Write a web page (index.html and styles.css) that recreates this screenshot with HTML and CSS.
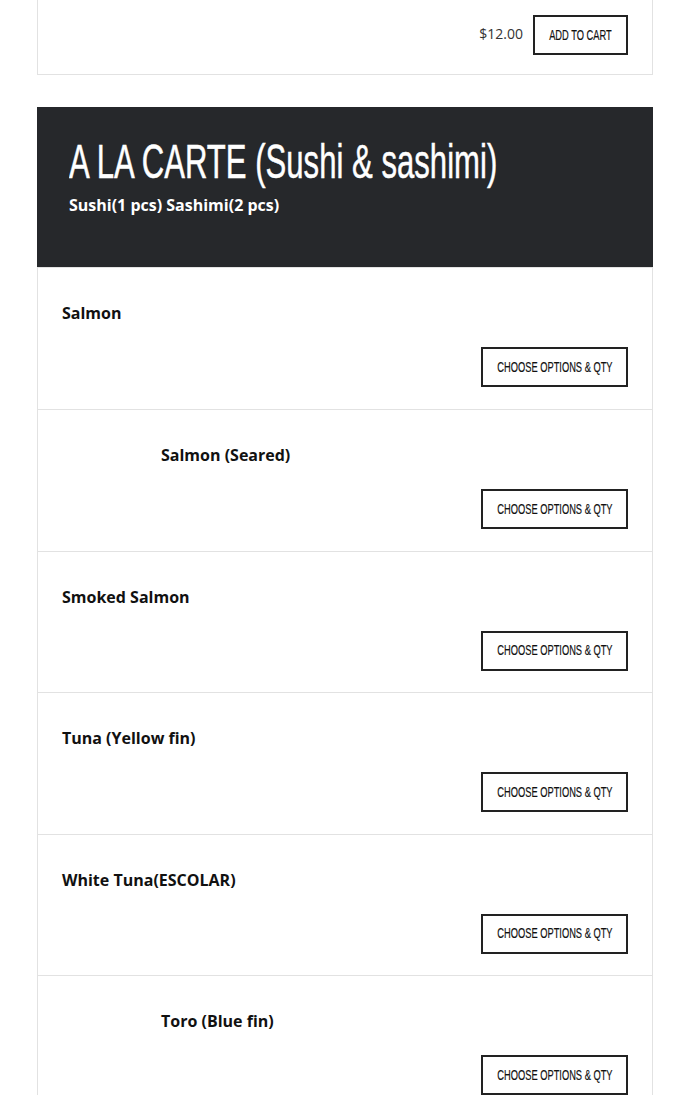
FILE: index.html
```html
<!DOCTYPE html>
<html>
<head>
<meta charset="utf-8">
<link rel="stylesheet" href="styles.css">
</head>
<body>
<div class="wrap">
  <div class="card top-card">
    <div class="buy">
      <span class="price">$12.00</span>
      <button class="btn btn-cart"><span class="cond">Add to cart</span></button>
    </div>
  </div>

  <div class="section-head">
    <h2 class="section-title"><span class="cond-title">A LA CARTE (Sushi &amp; sashimi)</span></h2>
    <p class="section-sub">Sushi(1 pcs) Sashimi(2 pcs)</p>
  </div>

  <div class="items">
    <div class="item">
      <div class="item-name">Salmon</div>
      <div class="item-actions"><button class="btn btn-opts"><span class="cond">Choose options &amp; qty</span></button></div>
    </div>
    <div class="item">
      <div class="item-name"><span class="thumb"></span>Salmon (Seared)</div>
      <div class="item-actions"><button class="btn btn-opts"><span class="cond">Choose options &amp; qty</span></button></div>
    </div>
    <div class="item">
      <div class="item-name">Smoked Salmon</div>
      <div class="item-actions"><button class="btn btn-opts"><span class="cond">Choose options &amp; qty</span></button></div>
    </div>
    <div class="item">
      <div class="item-name">Tuna (Yellow fin)</div>
      <div class="item-actions"><button class="btn btn-opts"><span class="cond">Choose options &amp; qty</span></button></div>
    </div>
    <div class="item">
      <div class="item-name">White Tuna(ESCOLAR)</div>
      <div class="item-actions"><button class="btn btn-opts"><span class="cond">Choose options &amp; qty</span></button></div>
    </div>
    <div class="item">
      <div class="item-name"><span class="thumb"></span>Toro (Blue fin)</div>
      <div class="item-actions"><button class="btn btn-opts"><span class="cond">Choose options &amp; qty</span></button></div>
    </div>
  </div>
</div>
</body>
</html>
```
FILE: styles.css
```css
* { box-sizing: border-box; }
html, body { margin: 0; padding: 0; background: #fff; }
body { font-family: "Open Sans", "Liberation Sans", sans-serif; color: #111; overflow: hidden; }
.wrap { width: 616px; margin: 0 37px; }

.card { border: 1px solid #e2e2e2; border-top: none; }
.top-card { height: 75px; padding: 15px 24px 0 24px; }
.buy { display: flex; justify-content: flex-end; align-items: center; gap: 10px; }
.price { font-size: 14px; color: #333; position: relative; top: -2px; }

.btn {
  font-family: "Liberation Sans", Arial, sans-serif;
  text-transform: uppercase;
  font-size: 15px;
  color: #111;
  background: #fff;
  border: 2px solid #222;
  height: 40px;
  padding: 0;
  display: flex;
  align-items: center;
  justify-content: center;
  overflow: hidden;
  white-space: nowrap;
}
.btn-cart { width: 95px; }
.btn-opts { width: 147px; }
.cond {
  display: inline-block;
  transform: scaleX(0.62);
  transform-origin: center;
  -webkit-text-stroke: 0.2px #111;
  position: relative;
  top: -1px;
}

.section-head {
  margin-top: 32px;
  background: #26282b;
  color: #fff;
  height: 160px;
  padding: 24px 32px 0 32px;
}
.section-title {
  margin: 0;
  font-family: "Liberation Sans", Arial, sans-serif;
  font-weight: normal;
  font-size: 49px;
  line-height: 60px;
  white-space: nowrap;
  overflow: hidden;
}
.cond-title {
  display: inline-block;
  transform: scaleX(0.635);
  transform-origin: left center;
  -webkit-text-stroke: 0.5px #fff;
}
.section-sub { margin: 2px 0 0 0; font-weight: bold; font-size: 16px; line-height: 24px; }

.items { border: 1px solid #e2e2e2; border-bottom: none; }
.item {
  border-bottom: 1px solid #e2e2e2;
  padding: 33px 24px 0 24px;
  height: 141.5px;
}
.items .item:first-child { height: 142px; }
.item-name { font-weight: bold; font-size: 16px; line-height: 24px; display: flex; }
.thumb { width: 75px; margin-right: 24px; flex: none; }
.item-actions { margin-top: 22px; display: flex; justify-content: flex-end; }
```
